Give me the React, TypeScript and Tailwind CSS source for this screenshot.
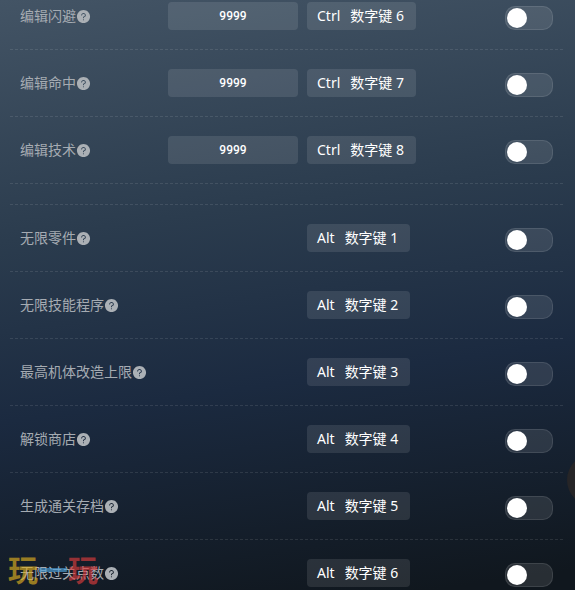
import React from "react";
import { AiFillQuestionCircle } from "react-icons/ai";

type Option = {
  name: string;
  value?: string;
  keys: string[];
};

const editOptions: Option[] = [
  { name: "编辑闪避", value: "9999", keys: ["Ctrl", "数字键 6"] },
  { name: "编辑命中", value: "9999", keys: ["Ctrl", "数字键 7"] },
  { name: "编辑技术", value: "9999", keys: ["Ctrl", "数字键 8"] },
];

const toggleOptions: Option[] = [
  { name: "无限零件", keys: ["Alt", "数字键 1"] },
  { name: "无限技能程序", keys: ["Alt", "数字键 2"] },
  { name: "最高机体改造上限", keys: ["Alt", "数字键 3"] },
  { name: "解锁商店", keys: ["Alt", "数字键 4"] },
  { name: "生成通关存档", keys: ["Alt", "数字键 5"] },
  { name: "无限过关点数", keys: ["Alt", "数字键 6"] },
];

const OptionRow = ({ option }: { option: Option }) => {
  return (
    <li className="flex items-center h-[67px] px-2.5 border-b border-dashed border-white/10">
      <label htmlFor={option.name} className="flex items-center w-[148px] shrink-0 text-sm text-[#a5abb2]">
        {option.name}
        <AiFillQuestionCircle className="size-[15px] text-[#abb0b5]" />
      </label>
      <div className="w-[130px] mr-[9px] shrink-0">
        {option.value && (
          <input
            type="text"
            aria-label={option.name + "数值"}
            defaultValue={option.value}
            className="block w-full h-7 rounded bg-white/10 text-center font-[Roboto,sans-serif] text-xs font-medium text-white outline-none"
          />
        )}
      </div>
      <button type="button" className="flex items-center gap-2.5 h-7 pl-2.5 pr-3 rounded bg-white/10 text-sm text-white whitespace-nowrap">
        {option.keys.map((key) => (
          <span key={key}>{key}</span>
        ))}
      </button>
      <div className="ml-auto pt-1">
        <input
          id={option.name}
          type="checkbox"
          role="switch"
          className="block appearance-none w-12 h-6 p-px rounded-[10px] border border-white/10 bg-white/10 before:block before:size-5 before:rounded-full before:bg-white checked:before:ml-6"
        />
      </div>
    </li>
  );
};

const App = () => {
  return (
    <main className="relative h-screen overflow-hidden pl-2.5 pr-3 bg-[linear-gradient(172deg,#435465_0%,#2b3c4e_36%,#1b2a40_63%,#10171e_97%)] font-['Noto_Sans','Noto_Sans_CJK_SC',sans-serif]">
      {/* the list is scrolled part way into its first row */}
      <ul className="-mt-[17px]">
        {editOptions.map((option) => (
          <OptionRow key={option.name} option={option} />
        ))}
      </ul>
      <ul className="mt-5 border-t border-dashed border-white/10">
        {toggleOptions.map((option) => (
          <OptionRow key={option.name} option={option} />
        ))}
      </ul>

      <button type="button" aria-label="更多" className="absolute top-[454px] -right-11 size-[52px] rounded-full bg-[#262527]" />

      <div className="absolute left-2 bottom-1 flex text-3xl leading-8 font-bold opacity-65 pointer-events-none">
        <span className="text-[#e0b020]">玩</span>
        <span className="text-[#4fa3dc]">一</span>
        <span className="text-[#dc3c3c]">玩</span>
      </div>
    </main>
  );
};

export default App;
